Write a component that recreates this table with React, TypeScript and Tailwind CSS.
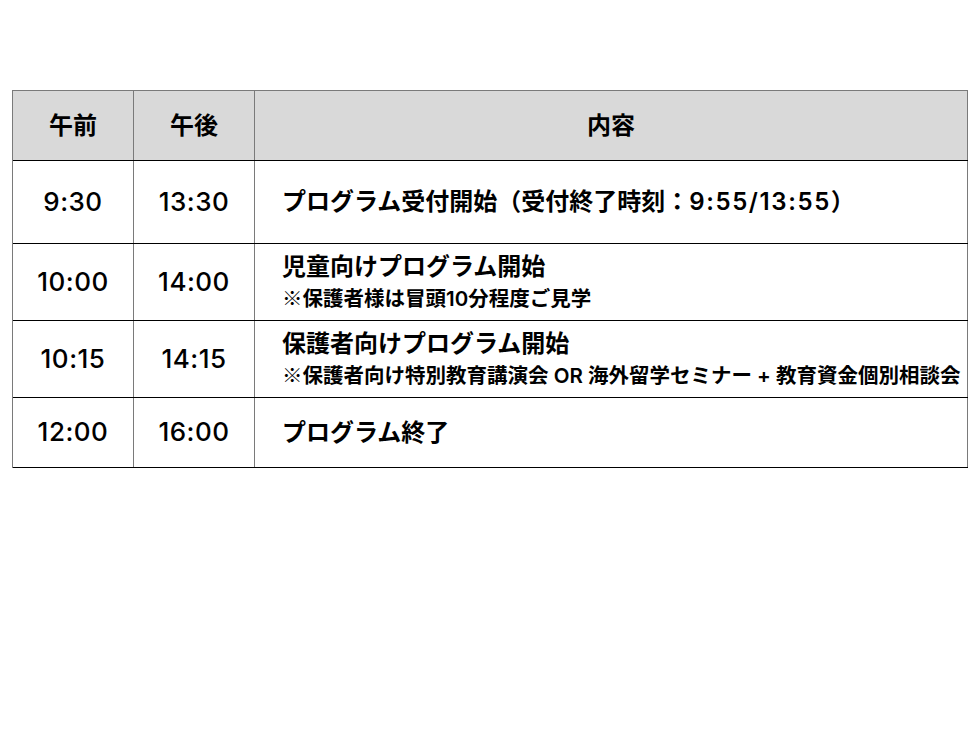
import type { ReactNode } from "react";

const rows: { am: string; pm: string; main: ReactNode; sub?: string; h: string }[] = [
  {
    am: "9:30",
    pm: "13:30",
    main: (
      <>
        プログラム受付開始（受付終了時刻：<span className="tracking-[1.6px]">9:55/13:55</span>）
      </>
    ),
    h: "h-[83px]",
  },
  { am: "10:00", pm: "14:00", main: "児童向けプログラム開始", sub: "保護者様は冒頭10分程度ご見学", h: "h-[77px]" },
  {
    am: "10:15",
    pm: "14:15",
    main: "保護者向けプログラム開始",
    sub: "保護者向け特別教育講演会 OR 海外留学セミナー + 教育資金個別相談会",
    h: "h-[77px]",
  },
  { am: "12:00", pm: "16:00", main: "プログラム終了", h: "h-[70px]" },
];

const font = "font-['Inter','Noto_Sans_CJK_JP',sans-serif]";
const cjk = "font-['Noto_Sans_CJK_JP',sans-serif]";

export default function App() {
  return (
    <div className={`w-[980px] h-[735px] bg-white pt-[90px] pl-[12px] text-black ${font}`}>
      <div className="w-[956px] border-l border-t border-[#7a7a7a]">
        {/* Header */}
        <div className="flex h-[70px] bg-[#d9d9d9] border-b border-black text-[24px] font-semibold">
          <div className="w-[121px] flex items-center justify-center border-r border-[#7a7a7a]">午前</div>
          <div className="w-[121px] flex items-center justify-center border-r border-[#7a7a7a]">午後</div>
          <div className="flex-1 flex items-center justify-center border-r border-[#7a7a7a]">内容</div>
        </div>

        {rows.map((r) => (
          <div key={r.am} className={`flex ${r.h} border-b border-black`}>
            <div className="w-[121px] flex items-center justify-center border-r border-[#7a7a7a] text-[26px] font-medium tracking-[0.5px] pb-[2px]">
              {r.am}
            </div>
            <div className="w-[121px] flex items-center justify-center border-r border-[#7a7a7a] text-[26px] font-medium tracking-[0.5px] pb-[2px]">
              {r.pm}
            </div>
            <div className="flex-1 flex flex-col justify-center gap-[4px] pl-[27px] border-r border-[#7a7a7a] font-semibold">
              <div className="text-[24px] leading-[28px]">{r.main}</div>
              {r.sub && (
                <div className="text-[20.5px] leading-[24px]">
                  <span className={cjk}>※</span>
                  {r.sub}
                </div>
              )}
            </div>
          </div>
        ))}
      </div>
    </div>
  );
}
